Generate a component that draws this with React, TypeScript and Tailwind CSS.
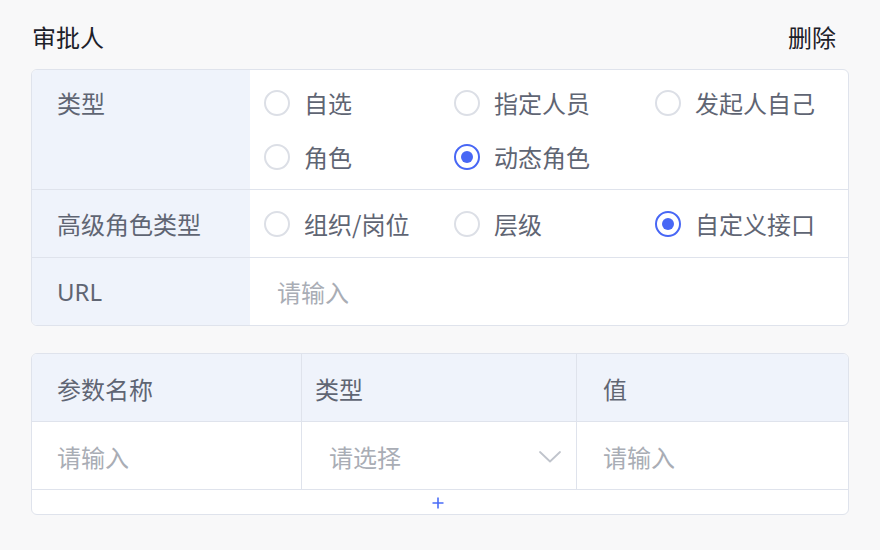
import React from "react";

const font = { fontFamily: '"Noto Sans CJK SC", "Noto Sans", sans-serif' };

function Radio({ label, checked = false }: { label: string; checked?: boolean }) {
  return (
    <div className="flex items-center gap-[14px] h-[28px]">
      {checked ? (
        <span className="w-[26px] h-[26px] rounded-full border-2 border-[#4867f5] flex items-center justify-center bg-white shrink-0">
          <span className="w-[12px] h-[12px] rounded-full bg-[#4867f5]" />
        </span>
      ) : (
        <span className="w-[26px] h-[26px] rounded-full border-2 border-[#dcdfe6] bg-white shrink-0" />
      )}
      <span className="text-[24px] leading-[28px] text-[#5f6573] whitespace-nowrap">{label}</span>
    </div>
  );
}

export default function App() {
  return (
    <div className="min-h-screen bg-[#f8f8f9] px-[31px]" style={font}>
      <div className="flex justify-between items-center pt-[22px] h-[52px] pl-[1px] pr-[13px] mb-[17px]">
        <span className="text-[24px] leading-[30px] text-[#1d2129]">审批人</span>
        <span className="text-[24px] leading-[30px] text-[#1d2129]">删除</span>
      </div>

      <div className="border border-[#dfe3ec] rounded-[6px] overflow-hidden bg-white">
        <div className="flex border-b border-[#dfe3ec]">
          <div className="w-[218px] bg-[#eff3fb] pl-[25px] pt-[19px] shrink-0">
            <span className="text-[24px] leading-[28px] text-[#5f6573] block">类型</span>
          </div>
          <div className="flex-1 grid grid-cols-[190px_201px_1fr] gap-y-[26px] pl-[14px] pt-[19px] pb-[18px]">
            <Radio label="自选" />
            <Radio label="指定人员" />
            <Radio label="发起人自己" />
            <Radio label="角色" />
            <Radio label="动态角色" checked />
          </div>
        </div>
        <div className="flex h-[68px] border-b border-[#dfe3ec]">
          <div className="w-[218px] bg-[#eff3fb] pl-[25px] flex items-center shrink-0">
            <span className="text-[24px] leading-[28px] text-[#5f6573]">高级角色类型</span>
          </div>
          <div className="flex-1 grid grid-cols-[190px_201px_1fr] items-center pl-[14px]">
            <Radio label="组织/岗位" />
            <Radio label="层级" />
            <Radio label="自定义接口" checked />
          </div>
        </div>
        <div className="flex h-[67px]">
          <div className="w-[218px] bg-[#eff3fb] pl-[25px] flex items-center shrink-0">
            <span className="text-[24px] leading-[28px] text-[#5f6573]" style={{ fontFamily: '"Noto Sans", "Noto Sans CJK SC", sans-serif' }}>URL</span>
          </div>
          <div className="flex-1 flex items-center pl-[27px]">
            <span className="text-[24px] leading-[28px] text-[#a9adb5]">请输入</span>
          </div>
        </div>
      </div>

      <div className="mt-[27px] border border-[#dfe3ec] rounded-[6px] overflow-hidden bg-white">
        <div className="grid grid-cols-[270px_275px_1fr] h-[68px] bg-[#eff3fb] border-b border-[#dfe3ec]">
          <div className="flex items-center pl-[25px] border-r border-[#dfe3ec]">
            <span className="text-[24px] leading-[28px] text-[#5f6573] mt-[3px]">参数名称</span>
          </div>
          <div className="flex items-center pl-[13px] border-r border-[#dfe3ec]">
            <span className="text-[24px] leading-[28px] text-[#5f6573] mt-[3px]">类型</span>
          </div>
          <div className="flex items-center pl-[26px]">
            <span className="text-[24px] leading-[28px] text-[#5f6573] mt-[3px]">值</span>
          </div>
        </div>
        <div className="grid grid-cols-[270px_275px_1fr] h-[68px] border-b border-[#dfe3ec]">
          <div className="flex items-center pl-[25px] border-r border-[#dfe3ec]">
            <span className="text-[24px] leading-[28px] text-[#a9adb5] mt-[2px]">请输入</span>
          </div>
          <div className="flex items-center justify-between pl-[27px] pr-[15px] border-r border-[#dfe3ec]">
            <span className="text-[24px] leading-[28px] text-[#a9adb5] mt-[2px]">请选择</span>
            <svg width="22" height="12" viewBox="0 0 22 12" fill="none" className="mt-[2px]">
              <path d="M1 1 L11 10.5 L21 1" stroke="#c0c4cc" strokeWidth="1.8" strokeLinecap="round" strokeLinejoin="round" />
            </svg>
          </div>
          <div className="flex items-center pl-[26px]">
            <span className="text-[24px] leading-[28px] text-[#a9adb5] mt-[2px]">请输入</span>
          </div>
        </div>
        <div className="h-[24px] flex items-center justify-center">
          <svg width="12" height="12" viewBox="0 0 12 12" className="ml-[-4px] mt-[2px]">
            <path d="M6 0.5 V11.5 M0.5 6 H11.5" stroke="#4a6cf7" strokeWidth="1.6" />
          </svg>
        </div>
      </div>
    </div>
  );
}
